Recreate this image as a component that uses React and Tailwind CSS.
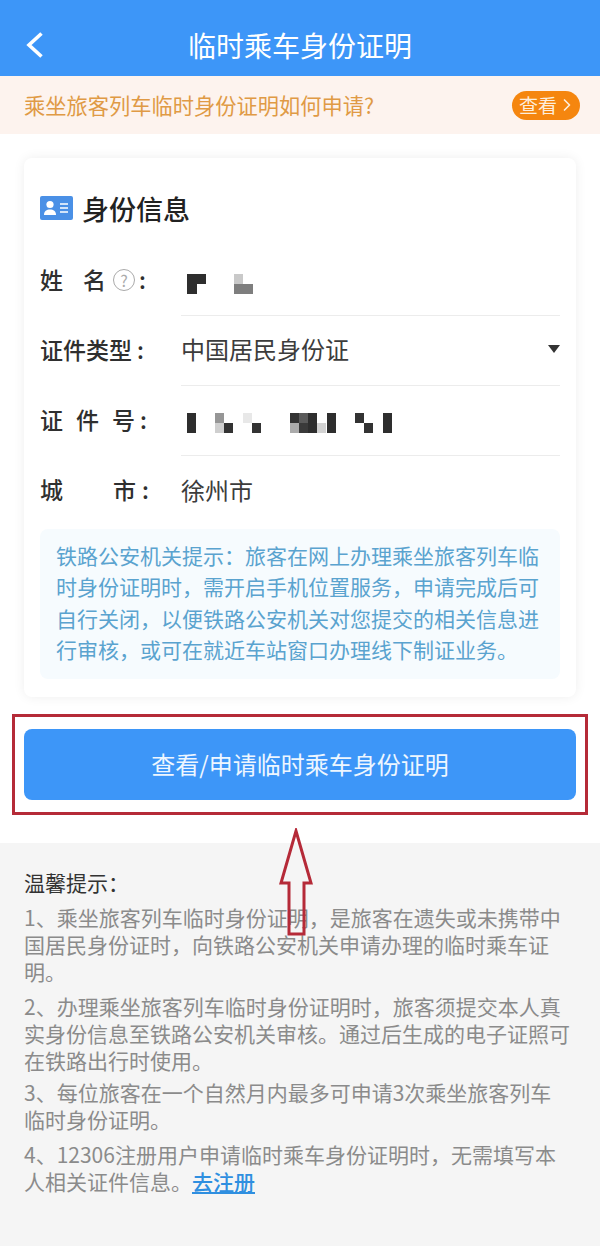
import { ChevronRight } from 'lucide-react';

const FONT = { fontFamily: '"Noto Sans CJK SC", "Noto Sans", sans-serif' };

// pixelated blocks over the personal data: [x, y, w, h, color]
const nameMosaic = [
  [0, 0, 19, 10, '#2e2e2e'],
  [0, 10, 10, 10, '#2e2e2e'],
  [47, 0, 9, 10, '#c9c9c9'],
  [47, 10, 19, 10, '#7e7e7e'],
];
const idMosaic = [
  [0, 0, 9, 20, '#2e2e2e'],
  [28, 0, 9, 10, '#969696'],
  [28, 10, 9, 10, '#cfcfcf'],
  [37, 10, 9, 10, '#333333'],
  [56, 0, 9, 10, '#e8e8e8'],
  [65, 10, 9, 10, '#333333'],
  [103, 0, 9, 10, '#333333'],
  [103, 10, 9, 10, '#ababab'],
  [112, 0, 9, 10, '#5a5a5a'],
  [112, 10, 9, 10, '#3a3a3a'],
  [121, 0, 9, 20, '#2e2e2e'],
  [130, 10, 9, 10, '#d2d2d2'],
  [140, 0, 9, 20, '#2e2e2e'],
  [168, 0, 9, 10, '#333333'],
  [177, 10, 9, 10, '#333333'],
  [196, 0, 9, 20, '#2e2e2e'],
];

function Mosaic({ blocks, width }) {
  return (
    <svg width={width} height="20" viewBox={`0 0 ${width} 20`} className="block">
      {blocks.map(([x, y, w, h, fill], i) => (
        <rect key={i} x={x} y={y} width={w} height={h} fill={fill} />
      ))}
    </svg>
  );
}

function IdCardIcon() {
  return (
    <svg width="33" height="24" viewBox="0 0 33 24" className="block shrink-0">
      <rect width="33" height="24" rx="2" fill="#4a90e6" />
      <circle cx="10" cy="8.5" r="3.6" fill="#fff" />
      <path d="M4 19c0-3.8 2.6-5.4 6-5.4s6 1.6 6 5.4z" fill="#fff" />
      <path d="M20 8h8M20 12h8M20 16h8" stroke="#fff" strokeWidth="1.5" />
    </svg>
  );
}

function Row({ label, children }) {
  return (
    <div className="flex h-[70px] items-center">
      <div className="flex w-[141px] shrink-0 items-center pb-[3px] text-[23px] font-medium leading-none text-[#2f2f2f]">
        {label}
      </div>
      <div className="flex h-full flex-1 items-center text-[24px] text-[#3c3c3c]">{children}</div>
    </div>
  );
}

export default function App() {
  return (
    <div className="relative flex h-[1246px] w-[600px] flex-col overflow-hidden bg-white" style={FONT}>
      {/* header */}
      <div className="relative flex h-[76px] shrink-0 items-center justify-center bg-[#3d96f8] pt-[14px] text-[28px] text-white">
        <svg width="20" height="28" viewBox="0 0 20 28" className="absolute left-[25px] top-[31px]">
          <path d="M16.5 2.5 L4 14 L16.5 25.5" fill="none" stroke="#fff" strokeWidth="3.6" />
        </svg>
        临时乘车身份证明
      </div>

      {/* banner */}
      <div className="flex h-[58px] shrink-0 items-center justify-between bg-[#fdf3ee] pl-[24px] pr-[20px]">
        <span className="text-[21.25px] text-[#e09a45]">乘坐旅客列车临时身份证明如何申请?</span>
        <span className="flex h-[29px] w-[68px] items-center justify-center rounded-full bg-[#f5860f] pl-[4px] text-[19px] text-[#fdeedd]">
          查看
          <ChevronRight size={20} strokeWidth={2} />
        </span>
      </div>

      {/* form card */}
      <div className="mx-[24px] mt-[24px] h-[539px] shrink-0 rounded-[8px] bg-white px-[16px] pt-[31px] shadow-[0_0_12px_rgba(0,0,0,0.07)]">
        <div className="flex h-[38px] items-center gap-[9px]">
          <IdCardIcon />
          <span className="text-[27px] font-medium leading-none text-[#222]">身份信息</span>
        </div>
        <div className="mt-[19px]">
          <Row
            label={
              <>
                <span>姓</span>
                <span className="ml-[20px]">名</span>
                <span className="ml-[7px] flex h-[22px] w-[22px] items-center justify-center rounded-full border border-[#aaa] text-[16px] font-normal text-[#aaa]">
                  ?
                </span>
                <span className="ml-[4px]">:</span>
              </>
            }
          >
            <div className="flex h-full flex-1 items-center border-b border-[#ececec] pl-[6px] pt-[6px]">
              <Mosaic blocks={nameMosaic} width={66} />
            </div>
          </Row>
          <Row label={<><span>证件类型</span><span className="ml-[5px]">:</span></>}>
            <div className="flex h-full flex-1 items-center justify-between border-b border-[#ececec] pb-[3px]">
              <span>中国居民身份证</span>
              <span className="h-0 w-0 border-x-[6px] border-t-[8px] border-x-transparent border-t-[#333]" />
            </div>
          </Row>
          <Row
            label={
              <>
                <span>证</span>
                <span className="ml-[13px]">件</span>
                <span className="ml-[13px]">号</span>
                <span className="ml-[5px]">:</span>
              </>
            }
          >
            <div className="flex h-full flex-1 items-center border-b border-[#ececec] pl-[6px] pt-[5px]">
              <Mosaic blocks={idMosaic} width={205} />
            </div>
          </Row>
          <Row
            label={
              <>
                <span>城</span>
                <span className="ml-[50px]">市</span>
                <span className="ml-[6px]">:</span>
              </>
            }
          >
            <span className="pb-[3px]">徐州市</span>
          </Row>
        </div>
        <div className="mt-[3px] h-[150px] whitespace-nowrap rounded-[8px] bg-[#f6fbfe] px-[16px] py-[11px] text-[21px] leading-[31.3px] text-[#5aa3cf]">
          铁路公安机关提示：旅客在网上办理乘坐旅客列车临
          <br />
          时身份证明时，需开启手机位置服务，申请完成后可
          <br />
          自行关闭，以便铁路公安机关对您提交的相关信息进
          <br />
          行审核，或可在就近车站窗口办理线下制证业务。
        </div>
      </div>

      {/* action, boxed in red by the screenshot's author */}
      <div className="mx-[12px] mt-[17px] h-[101px] shrink-0 border-[3px] border-[#b52a38] px-[9px] pt-[12px]">
        <button className="flex h-[71px] w-full items-center justify-center rounded-[8px] bg-[#3d96f8] pb-[2px] text-[24px] text-[#eef6ff]">
          查看/申请临时乘车身份证明
        </button>
      </div>

      {/* tips */}
      <div className="mt-[28px] flex-1 whitespace-nowrap bg-[#f5f5f5] px-[24px] pt-[26px] text-[21px] leading-[27px] text-[#8b8b8b]">
        <div className="mb-[8px] text-[#333]">温馨提示：</div>
        <p className="mb-[8px]">
          1、乘坐旅客列车临时身份证明，是旅客在遗失或未携带中
          <br />
          国居民身份证时，向铁路公安机关申请办理的临时乘车证
          <br />
          明。
        </p>
        <p className="mb-[5px]">
          2、办理乘坐旅客列车临时身份证明时，旅客须提交本人真
          <br />
          实身份信息至铁路公安机关审核。通过后生成的电子证照可
          <br />
          在铁路出行时使用。
        </p>
        <p className="mb-[8px]">
          3、每位旅客在一个自然月内最多可申请3次乘坐旅客列车
          <br />
          临时身份证明。
        </p>
        <p>
          4、12306注册用户申请临时乘车身份证明时，无需填写本
          <br />
          人相关证件信息。
          <span className="font-medium text-[#2f8fe0] underline">去注册</span>
        </p>
      </div>

      {/* red annotation arrow */}
      <svg width="36" height="110" viewBox="0 0 36 110" className="absolute left-[278px] top-[828px]">
        <path d="M18 3 L33 55 H26 V106 H11 V55 H3 Z" fill="none" stroke="#b52a38" strokeWidth="3" />
      </svg>
    </div>
  );
}
